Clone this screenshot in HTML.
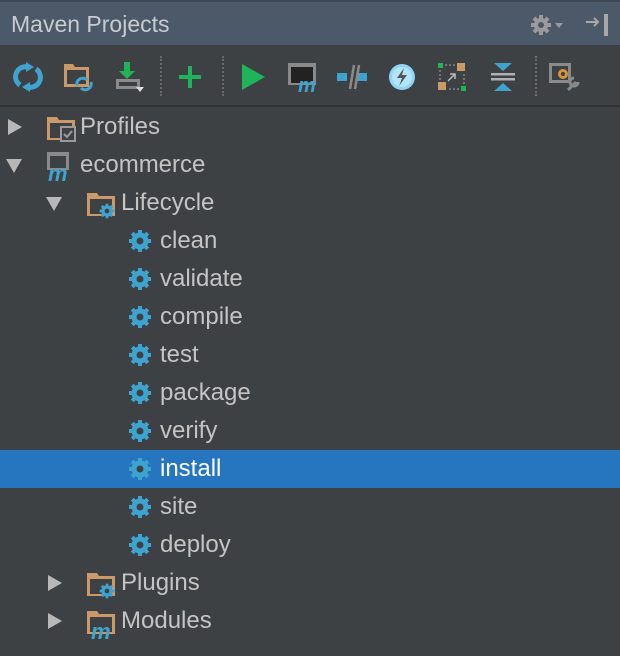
<!DOCTYPE html>
<html><head><style>
*{margin:0;padding:0;box-sizing:border-box}
body{width:620px;height:656px;background:#3e4143;font-family:"Liberation Sans",sans-serif;overflow:hidden;position:relative}
.hdr{position:absolute;left:0;top:0;width:620px;height:46px;background:#4b5968;border-top:2px solid #3f4a56;border-bottom:1px solid #3a4048}
.hdr .t{position:absolute;left:11px;top:9px;font-size:23px;color:#c8ccd0}
.tb{position:absolute;left:0;top:46px;width:620px;height:61px;background:#3e4143;border-bottom:2px solid #303234}
.sep{position:absolute;top:10px;width:0;height:40px;border-left:2px dotted #6a6a6a}
.row{position:absolute;left:0;width:620px;height:38px}
.row .tx{position:absolute;top:5px;font-size:24px;color:#c4c4c4}
.sel{background:#2675bf}
.sel .tx{color:#fff}
.arr{position:absolute}
svg{position:absolute}
</style></head><body>
<svg width="0" height="0" style="position:absolute"><defs>
<symbol id="g" viewBox="0 0 24 24"><g fill="#3fa3cf"><circle cx="12" cy="12" r="8.5"/><rect x="10" y="1" width="4" height="22"/><rect x="1" y="10" width="22" height="4"/><rect x="10" y="1" width="4" height="22" transform="rotate(45 12 12)"/><rect x="10" y="1" width="4" height="22" transform="rotate(-45 12 12)"/></g><circle cx="12" cy="12" r="3.5" fill="#3e4143"/></symbol>
<symbol id="f" viewBox="0 0 32 28"><path d="M1 2h10l2 3h16v20H1z" fill="#c99a68"/><rect x="4" y="8" width="22" height="15" fill="#3e4143"/></symbol>
</defs></svg>
<div class="hdr"><div class="t">Maven Projects</div>
<svg style="left:530px;top:12px" width="40" height="22" viewBox="0 0 40 22"><g fill="#9a9a9a"><circle cx="11" cy="11" r="7"/><rect x="9" y="1" width="4" height="20"/><rect x="1" y="9" width="20" height="4"/><rect x="9" y="1" width="4" height="20" transform="rotate(45 11 11)"/><rect x="9" y="1" width="4" height="20" transform="rotate(-45 11 11)"/><path d="M25 9h8l-4 5z"/></g><circle cx="11" cy="11" r="3" fill="#4b5968"/></svg>
<svg style="left:584px;top:12px" width="28" height="24" viewBox="0 0 28 24"><path d="M2 8h12M10 4l4 4-4 4" stroke="#a8a8a8" stroke-width="2" fill="none"/><rect x="20" y="0" width="4" height="22" fill="#a8a8a8"/></svg>
</div>
<div class="tb">
<svg style="left:12px;top:15px" width="32" height="32" viewBox="0 0 32 32"><path d="M8 24A10 10 0 0 1 16 6M24 8A10 10 0 0 1 16 26" stroke="#3fa3cf" stroke-width="5" fill="none"/><path d="M14 1l8 5-8 5z M18 31l-8-5 8-5z" fill="#3fa3cf"/></svg>
<svg style="left:63px;top:16px" width="32" height="30" viewBox="0 0 32 30"><path d="M1 2h9l2 3h14v20H1z" fill="#c99a68"/><rect x="4" y="8" width="19" height="14" fill="#3e4143"/><path d="M14 24a6 6 0 0 1 10-6M28 20a6 6 0 0 1-10 6" stroke="#3fa3cf" stroke-width="3" fill="none"/></svg>
<svg style="left:113px;top:14px" width="36" height="34" viewBox="0 0 36 34"><rect x="3" y="19" width="24" height="10" fill="#8a8a8a"/><rect x="6" y="22" width="18" height="4" fill="#3e4143"/><path d="M11 2h6v9h5l-8 8-8-8h5z" fill="#1fb35a"/><path d="M23 27h8l-4 5z" fill="#ddd"/></svg>
<div class="sep" style="left:160px"></div>
<svg style="left:177px;top:18px" width="26" height="26" viewBox="0 0 26 26"><path d="M11 2h4v9h9v4h-9v9h-4v-9H2v-4h9z" fill="#1fb35a"/></svg>
<div class="sep" style="left:222px"></div>
<svg style="left:241px;top:17px" width="26" height="28" viewBox="0 0 26 28"><path d="M1 1l23 13L1 27z" fill="#1fb35a"/></svg>
<svg style="left:286px;top:15px" width="34" height="32" viewBox="0 0 34 32"><rect x="2" y="2" width="28" height="22" fill="#8a8a8a"/><rect x="5" y="6" width="22" height="16" fill="#222"/><text x="12" y="31" font-family="Liberation Sans" font-style="italic" font-weight="bold" font-size="20" fill="#3fa3cf">m</text></svg>
<svg style="left:337px;top:17px" width="30" height="28" viewBox="0 0 30 28"><rect x="0" y="10" width="10" height="8" fill="#3fa3cf"/><rect x="20" y="10" width="10" height="8" fill="#3fa3cf"/><path d="M13 26L17 2M18 26L22 2" stroke="#8a8a8a" stroke-width="2.5"/></svg>
<svg style="left:387px;top:16px" width="30" height="30" viewBox="0 0 30 30"><circle cx="15" cy="15" r="13" fill="#8fd4f4"/><circle cx="15" cy="15" r="10" fill="#b4e4fa"/><path d="M17 6l-7 10h5l-3 8 8-11h-5z" fill="#555"/></svg>
<svg style="left:437px;top:16px" width="30" height="30" viewBox="0 0 30 30"><rect x="1" y="1" width="5" height="5" fill="#1fb35a"/><rect x="20" y="1" width="8" height="8" fill="#c99a68"/><rect x="1" y="20" width="8" height="8" fill="#c99a68"/><rect x="24" y="24" width="5" height="5" fill="#1fb35a"/><path d="M8 3h10M3 8v10M12 27h10M27 12v10" stroke="#aaa" stroke-dasharray="2 2"/><path d="M11 19l7-7M13 12h5v5" stroke="#bbb" stroke-width="1.5" fill="none"/></svg>
<svg style="left:490px;top:16px" width="26" height="30" viewBox="0 0 26 30"><path d="M4 1h18l-9 8z M4 29h18l-9-8z" fill="#3fa3cf"/><rect x="1" y="11" width="24" height="2.5" fill="#b0b0b0"/><rect x="1" y="16" width="24" height="2.5" fill="#b0b0b0"/></svg>
<div class="sep" style="left:535px"></div>
<svg style="left:548px;top:16px" width="34" height="30" viewBox="0 0 34 30"><rect x="1" y="1" width="22" height="20" fill="#8a8a8a"/><rect x="4" y="4" width="16" height="14" fill="#3e4143"/><circle cx="15" cy="12" r="5" fill="#d9923d"/><circle cx="15" cy="12" r="2" fill="#3e4143"/><path d="M20 28l8-8M26 16a4 4 0 1 0 4 4" stroke="#8a8a8a" stroke-width="3" fill="none"/></svg>
</div>

<div class="row" style="top:108px"><svg class="arr" style="left:8px;top:11px" width="14" height="16"><path d="M0 0l14 8-14 8z" fill="#b8b8b8"/></svg>
<svg style="left:46px;top:7px" width="32" height="28" viewBox="0 0 32 28"><use href="#f"/><rect x="15" y="12" width="14" height="14" fill="#3e4143" stroke="#9a9a9a" stroke-width="2"/><path d="M18 19l3 3 5-6" stroke="#9a9a9a" stroke-width="2" fill="none"/></svg><div class="tx" style="left:80px">Profiles</div></div>
<div class="row" style="top:146px"><svg class="arr" style="left:6px;top:13px" width="16" height="14"><path d="M0 0h16L8 14z" fill="#b8b8b8"/></svg>
<svg style="left:46px;top:5px" width="32" height="30" viewBox="0 0 32 30"><rect x="1" y="1" width="22" height="18" fill="#8a8a8a"/><rect x="4" y="5" width="16" height="12" fill="#3e4143"/><text x="2" y="30" font-family="Liberation Sans" font-style="italic" font-weight="bold" font-size="22" fill="#3fa3cf">m</text></svg><div class="tx" style="left:80px">ecommerce</div></div>
<div class="row" style="top:184px"><svg class="arr" style="left:46px;top:13px" width="16" height="14"><path d="M0 0h16L8 14z" fill="#b8b8b8"/></svg>
<svg style="left:86px;top:7px" width="32" height="28" viewBox="0 0 32 28"><use href="#f"/><use href="#g" x="13" y="12" width="16" height="16"/></svg><div class="tx" style="left:121px">Lifecycle</div></div>

<div class="row" style="top:222px"><svg style="left:128px;top:7px" width="24" height="24"><use href="#g"/></svg><div class="tx" style="left:160px">clean</div></div>
<div class="row" style="top:260px"><svg style="left:128px;top:7px" width="24" height="24"><use href="#g"/></svg><div class="tx" style="left:160px">validate</div></div>
<div class="row" style="top:298px"><svg style="left:128px;top:7px" width="24" height="24"><use href="#g"/></svg><div class="tx" style="left:160px">compile</div></div>
<div class="row" style="top:336px"><svg style="left:128px;top:7px" width="24" height="24"><use href="#g"/></svg><div class="tx" style="left:160px">test</div></div>
<div class="row" style="top:374px"><svg style="left:128px;top:7px" width="24" height="24"><use href="#g"/></svg><div class="tx" style="left:160px">package</div></div>
<div class="row" style="top:412px"><svg style="left:128px;top:7px" width="24" height="24"><use href="#g"/></svg><div class="tx" style="left:160px">verify</div></div>
<div class="row sel" style="top:450px"><svg style="left:128px;top:7px" width="24" height="24"><use href="#g"/></svg><div class="tx" style="left:160px">install</div></div>
<div class="row" style="top:488px"><svg style="left:128px;top:7px" width="24" height="24"><use href="#g"/></svg><div class="tx" style="left:160px">site</div></div>
<div class="row" style="top:526px"><svg style="left:128px;top:7px" width="24" height="24"><use href="#g"/></svg><div class="tx" style="left:160px">deploy</div></div>

<div class="row" style="top:564px"><svg class="arr" style="left:48px;top:11px" width="14" height="16"><path d="M0 0l14 8-14 8z" fill="#b8b8b8"/></svg>
<svg style="left:86px;top:7px" width="32" height="28" viewBox="0 0 32 28"><use href="#f"/><use href="#g" x="13" y="12" width="16" height="16"/></svg><div class="tx" style="left:121px">Plugins</div></div>
<div class="row" style="top:602px"><svg class="arr" style="left:48px;top:11px" width="14" height="16"><path d="M0 0l14 8-14 8z" fill="#b8b8b8"/></svg>
<svg style="left:86px;top:7px" width="32" height="30" viewBox="0 0 32 30"><use href="#f" width="32" height="28"/><text x="5" y="30" font-family="Liberation Sans" font-style="italic" font-weight="bold" font-size="22" fill="#3fa3cf">m</text></svg><div class="tx" style="left:121px">Modules</div></div>
</body></html>
